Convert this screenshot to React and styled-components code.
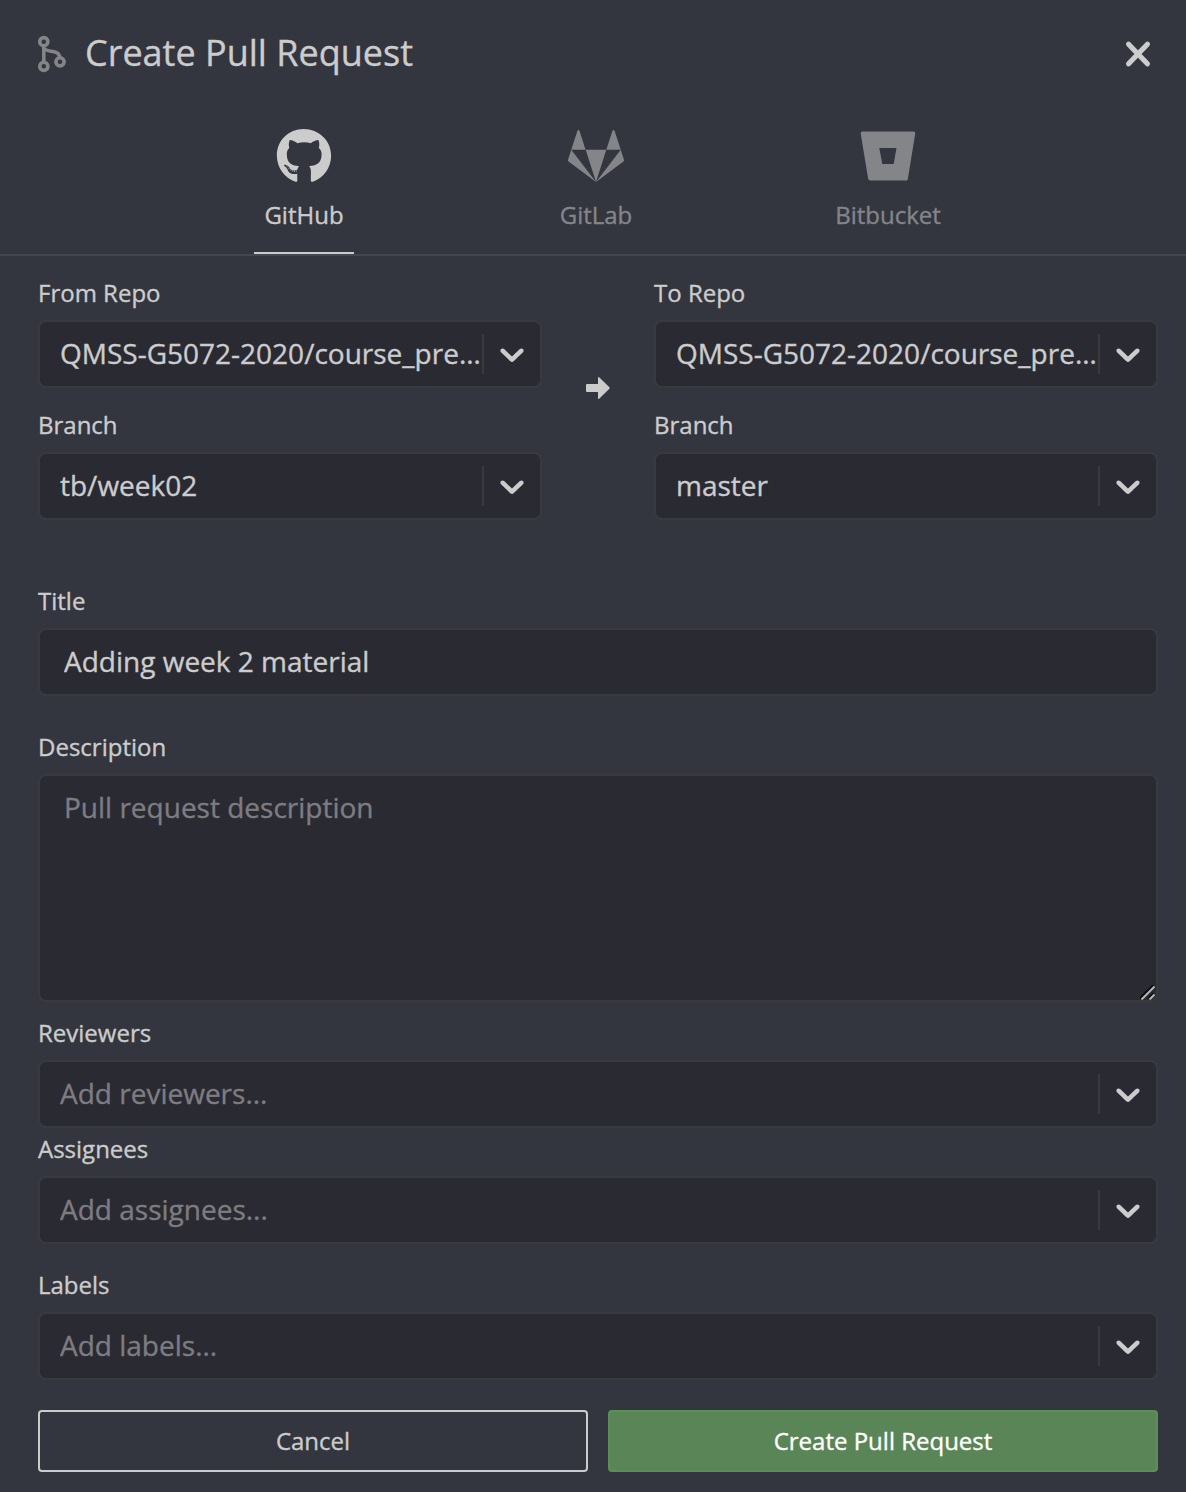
import React from 'react';
import styled, { createGlobalStyle } from 'styled-components';
import { FaGithub, FaBitbucket } from 'react-icons/fa';

const Global = createGlobalStyle`
  *, *::before, *::after { box-sizing: border-box; }
  body { margin: 0; background: #33363e; }
`;

const Modal = styled.main`
  width: 1186px;
  height: 1492px;
  overflow: hidden;
  background: #33363e;
  color: #cccccd;
  font-family: 'Open Sans', 'Noto Sans', sans-serif;
  font-size: 24px;
  -webkit-text-stroke: 0.35px;
`;

const Header = styled.header`
  display: flex;
  align-items: center;
  height: 108px;
  padding: 0 34px 0 36px;
`;

const Heading = styled.h1`
  flex: 1;
  margin: 0 0 2px 17px;
  font-size: 36px;
  font-weight: 400;
  line-height: 48px;
`;

const CloseButton = styled.button`
  display: flex;
  padding: 0;
  border: 0;
  background: none;
  color: inherit;
`;

const Tabs = styled.nav`
  display: flex;
  justify-content: center;
  gap: 192px;
  height: 148px;
  padding-left: 6px;
  border-bottom: 2px solid #44474f;
`;

const Tab = styled.button`
  display: flex;
  flex-direction: column;
  align-items: center;
  gap: 14px;
  width: 100px;
  height: 146px;
  padding: 20px 0 0;
  border: 0;
  border-bottom: 2px solid ${(p) => (p.$active ? '#cccccd' : 'transparent')};
  background: none;
  color: ${(p) => (p.$active ? '#cccccd' : '#848589')};
  font: inherit;
  line-height: 34px;
  white-space: nowrap;
`;

const Form = styled.form`
  display: flex;
  flex-direction: column;
  padding: 20px 28px 0 38px;
`;

const Endpoints = styled.div`
  display: grid;
  grid-template-columns: 504px 112px 504px;
  align-items: center;
  margin-bottom: 44px;
`;

const Side = styled.div`
  display: flex;
  flex-direction: column;
`;

const ArrowCell = styled.div`
  display: flex;
  justify-content: center;
  padding-bottom: 40px;
`;

const Field = styled.div`
  display: flex;
  flex-direction: column;
  margin-bottom: ${(p) => p.$gap || 0}px;
`;

const Label = styled.label`
  height: 44px;
  line-height: 34px;
`;

const Control = styled.div`
  display: flex;
  align-items: center;
  height: 68px;
  padding-left: 20px;
  border: 2px solid #3a3a3e;
  border-radius: 8px;
  background: #2a2a32;
`;

const Value = styled.span`
  flex: 1;
  min-width: 0;
  padding-bottom: 2px;
  overflow: hidden;
  color: ${(p) => (p.$muted ? '#7d7d81' : '#cccccd')};
  font-size: 28px;
  line-height: 40px;
  text-overflow: ellipsis;
  white-space: nowrap;
`;

const Indicator = styled.span`
  display: flex;
  align-items: center;
  justify-content: center;
  width: 58px;
  height: 40px;
  border-left: 2px solid #3a3a3e;
`;

const TextInput = styled.input`
  height: 68px;
  padding: 0 24px 2px;
  border: 2px solid #3a3a3e;
  border-radius: 8px;
  outline: 0;
  background: #2a2a32;
  color: #cccccd;
  font: 28px 'Open Sans', 'Noto Sans', sans-serif;
`;

const TextAreaFrame = styled.div`
  position: relative;
  display: flex;
  height: 228px;
`;

const TextArea = styled.textarea`
  flex: 1;
  padding: 11px 24px;
  border: 2px solid #3a3a3e;
  border-radius: 8px;
  outline: 0;
  resize: none;
  background: #2a2a32;
  color: #cccccd;
  font: 28px/40px 'Open Sans', 'Noto Sans', sans-serif;
  &::placeholder { color: #7d7d81; opacity: 1; }
`;

const Grip = styled.svg`
  position: absolute;
  right: 3px;
  bottom: 2px;
`;

const Actions = styled.footer`
  display: grid;
  grid-template-columns: 550px 550px;
  gap: 20px;
`;

const Button = styled.button`
  height: 62px;
  padding: 0 0 1px;
  border: 2px solid ${(p) => (p.$primary ? '#5b8f58' : '#cccccd')};
  border-radius: 4px;
  background: ${(p) => (p.$primary ? '#5a8557' : 'transparent')};
  color: ${(p) => (p.$primary ? '#ffffff' : '#cccccd')};
  font: inherit;
`;

const MergeIcon = () => (
  <svg width="32" height="40" viewBox="0 0 32 40" fill="none" stroke="#848589" strokeWidth="3.6">
    <circle cx="7.8" cy="7.7" r="4.1" />
    <circle cx="7.8" cy="32.3" r="4.1" />
    <circle cx="24" cy="27.8" r="4.1" />
    <path d="M7.8 12v16M7.8 14.5c3 2.6 6 2.8 10 3.2c4 .4 5.5 2 6 6" />
  </svg>
);

const CloseIcon = () => (
  <svg width="28" height="28" viewBox="0 0 28 28" fill="none" stroke="currentColor" strokeWidth="5.2" strokeLinecap="round">
    <path d="M4.6 4.2l18.8 19.6M23.4 4.2L4.6 23.8" />
  </svg>
);

const GitLabIcon = () => (
  <svg width="56" height="56" viewBox="0 0 512 512" fill="currentColor">
    <path d="M105.2 24.9c-3.1-8.9-15.7-8.9-18.9 0L29.8 199.7h132c-.1 0-56.6-174.8-56.6-174.8zM.9 287.7c-2.6 8 .3 16.9 7.1 22l247.9 184-226.2-294L.9 287.7zm160.8-88l94.3 294 94.3-294H161.7zm349.4 88l-28.8-88-226.3 294 247.9-184c6.9-5.1 9.7-14 7.2-22zM425.7 24.9c-3.1-8.9-15.7-8.9-18.9 0l-56.6 174.8h132L425.7 24.9z" />
  </svg>
);

const ArrowIcon = () => (
  <svg width="26" height="24" viewBox="0 0 26 24" fill="#cccccd">
    <path d="M2 8H13V2Q13 .4 14.4 1.6L24.4 11.2Q25 12 24.4 12.8L14.4 22.4Q13 23.6 13 22V16H2Q1 16 1 15V9Q1 8 2 8Z" />
  </svg>
);

const ChevronIcon = () => (
  <svg width="40" height="40" viewBox="0 0 20 20" fill="#cccccd">
    <path d="M4.516 7.548c0.436-0.446 1.043-0.481 1.576 0l3.908 3.747 3.908-3.747c0.533-0.481 1.141-0.446 1.574 0 0.436 0.445 0.408 1.197 0 1.615-0.406 0.418-4.695 4.502-4.695 4.502-0.217 0.223-0.502 0.335-0.787 0.335s-0.57-0.112-0.789-0.335c0 0-4.287-4.084-4.695-4.502s-0.436-1.17 0-1.615z" />
  </svg>
);

const Select = ({ label, value, placeholder, gap }) => (
  <Field $gap={gap}>
    <Label>{label}</Label>
    <Control>
      <Value $muted={!value}>{value || placeholder}</Value>
      <Indicator><ChevronIcon /></Indicator>
    </Control>
  </Field>
);

export default function App() {
  return (
    <>
      <Global />
      <Modal>
        <Header>
          <MergeIcon />
          <Heading>Create Pull Request</Heading>
          <CloseButton aria-label="Close"><CloseIcon /></CloseButton>
        </Header>
        <Tabs>
          <Tab $active><FaGithub size={56} />GitHub</Tab>
          <Tab><GitLabIcon />GitLab</Tab>
          <Tab><FaBitbucket size={56} />Bitbucket</Tab>
        </Tabs>
        <Form onSubmit={(e) => e.preventDefault()}>
          <Endpoints>
            <Side>
              <Select label="From Repo" value="QMSS-G5072-2020/course_pre…" gap={20} />
              <Select label="Branch" value="tb/week02" gap={20} />
            </Side>
            <ArrowCell><ArrowIcon /></ArrowCell>
            <Side>
              <Select label="To Repo" value="QMSS-G5072-2020/course_pre…" gap={20} />
              <Select label="Branch" value="master" gap={20} />
            </Side>
          </Endpoints>
          <Field $gap={34}>
            <Label>Title</Label>
            <TextInput defaultValue="Adding week 2 material" />
          </Field>
          <Field $gap={14}>
            <Label>Description</Label>
            <TextAreaFrame>
              <TextArea placeholder="Pull request description" />
              <Grip width="15" height="15" viewBox="0 0 15 15" fill="none">
                <path d="M0 13.5L13.5 0M8.5 13.5L13.5 8.5" stroke="#08080a" strokeWidth="2" />
                <path d="M1.5 14.5L14.5 1.5M9.5 14.5L14.5 9.5" stroke="#b5b5b5" strokeWidth="2" />
              </Grip>
            </TextAreaFrame>
          </Field>
          <Select label="Reviewers" placeholder="Add reviewers..." gap={4} />
          <Select label="Assignees" placeholder="Add assignees..." gap={24} />
          <Select label="Labels" placeholder="Add labels..." gap={30} />
          <Actions>
            <Button type="button">Cancel</Button>
            <Button $primary>Create Pull Request</Button>
          </Actions>
        </Form>
      </Modal>
    </>
  );
}
